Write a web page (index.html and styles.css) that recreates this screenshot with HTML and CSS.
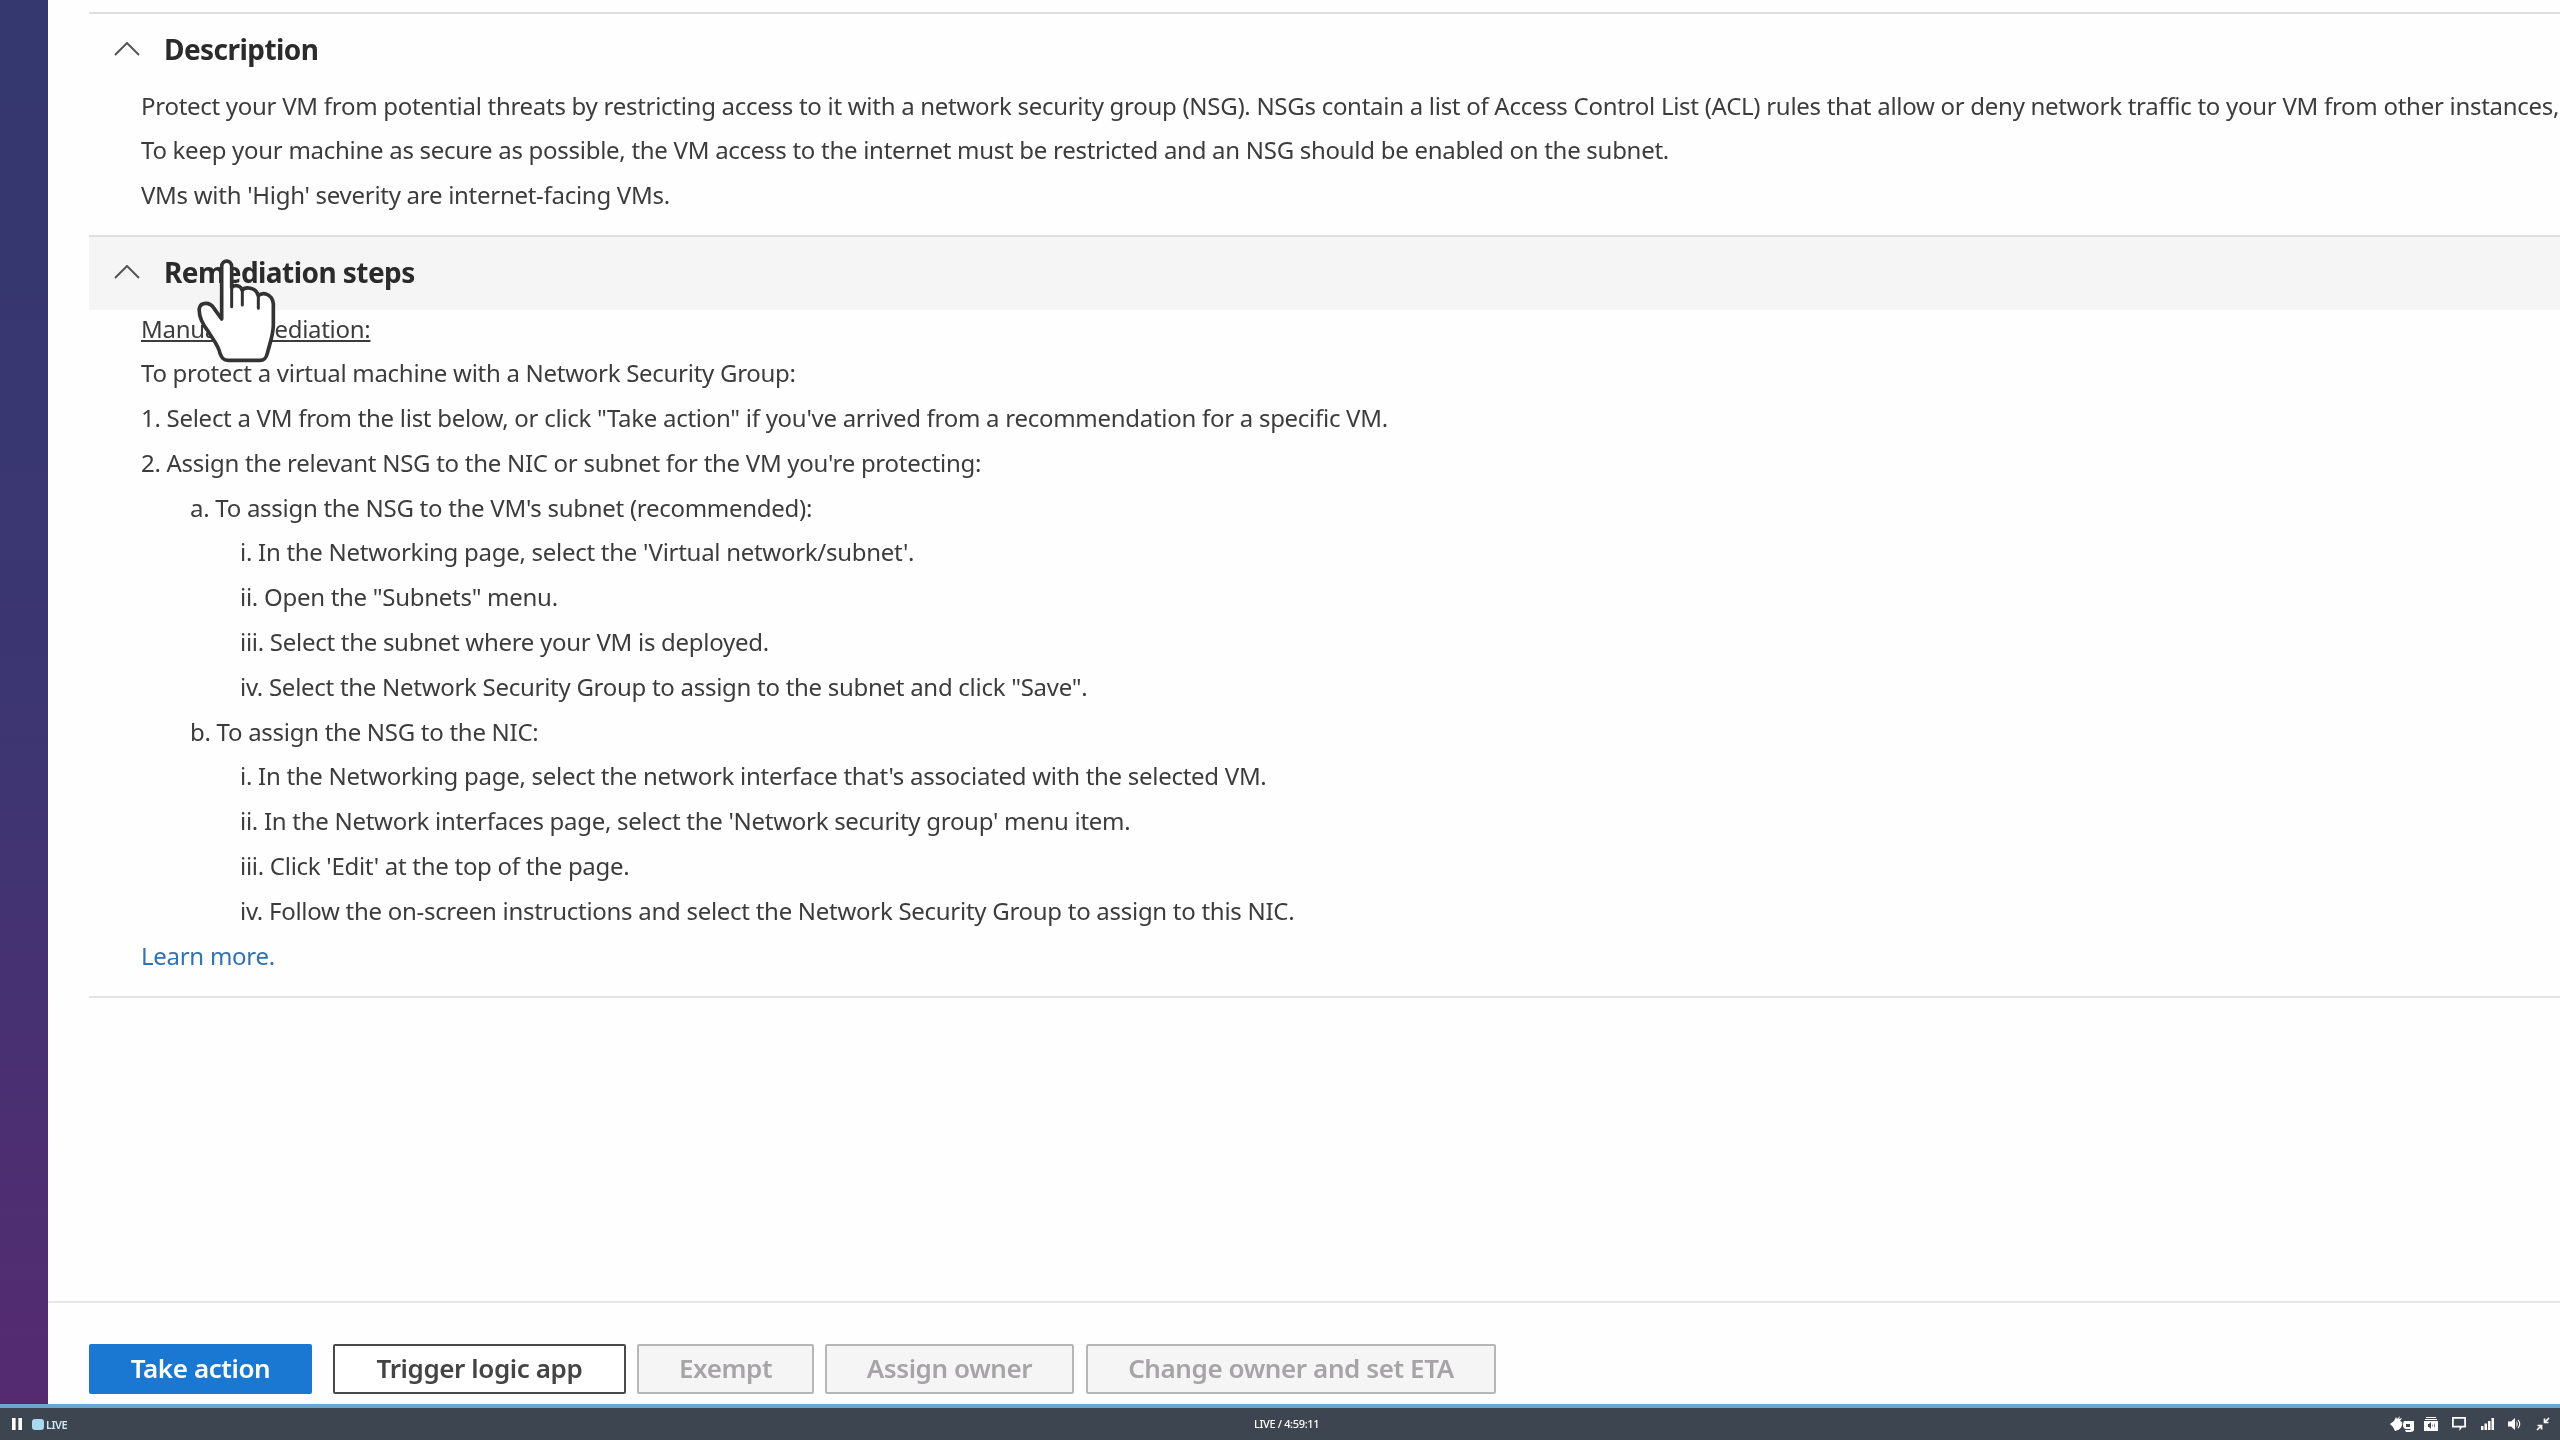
FILE: index.html
```html
<!DOCTYPE html>
<html lang="en">
<head>
<meta charset="utf-8">
<title>Remediation steps</title>
<link rel="stylesheet" href="styles.css">
</head>
<body>
<div class="app">
  <div class="rail"></div>
  <main class="main">
    <div class="content">
      <section class="section desc-section">
        <h2 class="head"><svg class="chev" viewBox="0 0 26 14"><path d="M1 13 13 1l12 12"/></svg>Description</h2>
        <div class="body desc">
          <p>Protect your VM from potential threats by restricting access to it with a network security group (NSG). NSGs contain a list of Access Control List (ACL) rules that allow or deny network traffic to your VM from other instances,</p>
          <p>To keep your machine as secure as possible, the VM access to the internet must be restricted and an NSG should be enabled on the subnet.</p>
          <p>VMs with 'High' severity are internet-facing VMs.</p>
        </div>
      </section>
      <section class="section steps">
        <h2 class="head hover"><svg class="chev" viewBox="0 0 26 14"><path d="M1 13 13 1l12 12"/></svg>Remediation steps</h2>
        <div class="body">
          <p><u>Manual remediation:</u></p>
          <p>To protect a virtual machine with a Network Security Group:</p>
          <p>1. Select a VM from the list below, or click "Take action" if you've arrived from a recommendation for a specific VM.</p>
          <p>2. Assign the relevant NSG to the NIC or subnet for the VM you're protecting:</p>
          <p class="l1">a. To assign the NSG to the VM's subnet (recommended):</p>
          <p class="l2">i. In the Networking page, select the 'Virtual network/subnet'.</p>
          <p class="l2">ii. Open the "Subnets" menu.</p>
          <p class="l2">iii. Select the subnet where your VM is deployed.</p>
          <p class="l2">iv. Select the Network Security Group to assign to the subnet and click "Save".</p>
          <p class="l1">b. To assign the NSG to the NIC:</p>
          <p class="l2">i. In the Networking page, select the network interface that's associated with the selected VM.</p>
          <p class="l2">ii. In the Network interfaces page, select the 'Network security group' menu item.</p>
          <p class="l2">iii. Click 'Edit' at the top of the page.</p>
          <p class="l2">iv. Follow the on-screen instructions and select the Network Security Group to assign to this NIC.</p>
          <p><a class="link" href="#">Learn more.</a></p>
        </div>
      </section>
    </div>
    <footer class="actions">
      <button class="btn primary">Take action</button>
      <button class="btn outline">Trigger logic app</button>
      <button class="btn off w-exempt">Exempt</button>
      <button class="btn off w-assign">Assign owner</button>
      <button class="btn off w-change">Change owner and set ETA</button>
    </footer>
  </main>
</div>
<div class="player">
  <div class="player-left">
    <svg class="pause" viewBox="0 0 10 12"><path d="M0 0h3.6v12H0zM6.4 0H10v12H6.4z"/></svg>
    <span class="live-dot"></span><span class="live">LIVE</span>
  </div>
  <div class="time">LIVE / 4:59:11</div>
  <div class="player-right">
    <svg class="ico asl" viewBox="0 0 25 16"><path d="M0 8l4-3 2-4 1 2 3-3-1 3 3-1-2 3 2 1c1 3-1 7-4 8l-3 1-2-4z"/><path d="M14 5h10v9c0 1-2 2-4 2h-4l-1-2h5l1-1h-5c-2 0-3-2-3-4 0-2 1-4 1-4zm2 3v3h4V8z" fill-rule="evenodd"/></svg>
    <svg class="ico" viewBox="0 0 14 14"><path fill-rule="evenodd" d="M2 0h10v1H2zM1 2h12v1H1zM0 4h14v10H0zM4 7v3h1l2 2V5L5 7zM8 7v3c.8-1 .8-2 0-3zM10 6v5c1-2 1-3 0-5z"/></svg>
    <svg class="ico" viewBox="0 0 14 14"><path fill-rule="evenodd" d="M0 0h14v10.500h-4L7.500 14V10.500H0zM1.800 1.800v7h10.400v-7z"/></svg>
    <svg class="ico" viewBox="0 0 14 14"><path d="M1 9h2.500v4H1zM4.500 6.500H7V13H4.500zM8 4h2.500v9H8zM11.500 1H14v12h-2.500z"/></svg>
    <svg class="ico" viewBox="0 0 14 14"><path d="M0 4.500h3L7 1v12L3 9.500H0zM8.500 4c1.500 1.500 1.500 4.500 0 6zM10 2.500c3 2.500 3 6.500 0 9l-.5-.8c2.300-2.200 2.300-5.200 0-7.400z"/></svg>
    <svg class="ico" viewBox="0 0 14 14"><path class="exp" d="M13 1 8.500 5.500M8.500 1.500v4h4M1 13l4.500-4.500M1.500 8.500h4v4"/></svg>
  </div>
</div>
<svg class="hand" viewBox="0 0 300 375"><path d="M95 65C95 43 125 43 125 65V128C132 118 152 120 157 136C165 124 198 126 205 152C218 140 246 146 250 176V240C250 270 238 300 232 325C228 342 222 346 210 346H115C100 346 95 338 90 325C85 300 70 285 55 260C40 240 25 215 28 190C32 170 60 170 72 190L95 222Z"/><path class="f" d="M125 128V185M157 136V180M205 152V190"/></svg>
```
FILE: styles.css
```css
* { box-sizing: border-box; }
html, body { margin: 0; padding: 0; }
body { width: 2560px; height: 1440px; overflow: hidden; background: #fefefe; font-family: "Noto Sans", "Open Sans", sans-serif; color: #333; display: flex; flex-direction: column; position: relative; filter: blur(.6px); }
.app { flex: 1; display: flex; min-height: 0; }
.rail { width: 48px; flex: none; background: linear-gradient(180deg, #34386e 0%, #3c3673 50%, #552a70 100%); }
.main { flex: 1; min-width: 0; display: flex; flex-direction: column; overflow: hidden; }
.content { flex: 1; padding: 12px 0 0 41px; }
.section { border-top: 2px solid #dedede; }
.desc-section { height: 223px; }
.steps { border-bottom: 2px solid #e4e4e4; height: 763px; }
.desc { margin-top: -2px; }
.desc p { height: 44.3px; line-height: 44.3px; }
.head { display: flex; align-items: center; margin: 0; height: 72px; padding: 0 0 3px 25px; font-size: 28px; font-weight: 700; color: #2b2b2b; letter-spacing: -.55px; }
.head.hover { height: 73px; background: #f6f5f6; margin-bottom: -4px; }
.chev { width: 26px; height: 14px; margin-right: 24px; fill: none; stroke: #555; stroke-width: 2; }
.body { padding-left: 52px; font-size: 24px; color: #3c3c3c; letter-spacing: -.28px; white-space: nowrap; }
.body p { margin: 0; }
.steps .body p { height: 44.8px; line-height: 44.8px; position: relative; top: .5px; }
.l1 { padding-left: 49px; }
.l2 { padding-left: 99px; }
.link { color: #2f72b8; text-decoration: none; }
.actions { height: 103px; border-top: 2px solid #e6e6e6; padding: 41px 0 0 41px; display: flex; gap: 11px; flex: none; }
.btn { height: 50px; padding: 0 0 3px; font: 600 26px "Noto Sans", "Open Sans", sans-serif; letter-spacing: -.4px; border-radius: 2px; background: #fff; white-space: nowrap; }
.primary { width: 223px; margin-right: 10px; background: #1b78d2; border: 2px solid #1b78d2; color: #fff; }
.outline { width: 293px; border: 2px solid #4a4a4a; color: #444; }
.off { border: 2px solid #b8b5b8; background: #f6f5f6; color: #a6a4a6; }
.w-exempt { width: 177px; }
.w-assign { width: 249px; }
.w-change { width: 410px; margin-left: 1px; }
.player { flex: none; height: 36px; border-top: 4px solid #6ba7cc; background: #3d4650; display: flex; align-items: center; justify-content: space-between; color: #fff; font-size: 11px; position: relative; padding: 0 10px 0 12px; }
.player-left { display: flex; align-items: center; }
.pause { width: 10px; height: 12px; fill: #fff; margin-right: 10px; }
.live-dot { width: 12px; height: 11px; border-radius: 3px; background: #a9d9f0; margin-right: 2px; }
.live { font-weight: 600; letter-spacing: -.5px; color: #d4e6f0; }
.time { position: absolute; left: 1254px; top: 8px; letter-spacing: -.35px; font-weight: 500; }
.player-right { display: flex; align-items: center; gap: 14px; }
.ico { width: 14px; height: 14px; fill: #fff; }
.asl { width: 25px; height: 16px; margin-right: -5px; }
.exp { fill: none; stroke: #fff; stroke-width: 1.7; }
.hand { position: absolute; left: 190px; top: 245px; width: 100px; height: 125px; fill: #fff; stroke: #333; stroke-width: 11; stroke-linejoin: round; }
.hand .f { fill: none; stroke-linecap: round; stroke-width: 9; }
```
